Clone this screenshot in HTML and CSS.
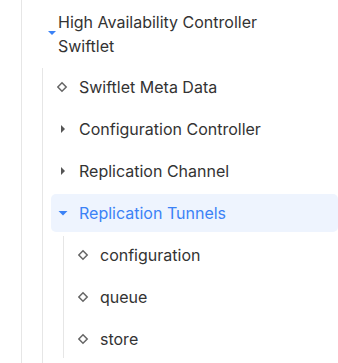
FILE: index.html
```html
<!DOCTYPE html>
<html>
<head>
<meta charset="utf-8">
<link rel="stylesheet" href="styles.css">
</head>
<body>
<div class="level level-a">
  <div class="top-node">
    <svg class="top-caret" width="8" height="4" viewBox="0 0 8 4"><polygon points="0,0 8,0 4,4" fill="#3b82f6"/></svg>
    <span class="top-label">High Availability Controller Swiftlet</span>
  </div>
  <div class="level level-b">
    <div class="row">
      <span class="icon"><svg width="12" height="12" viewBox="0 0 12 12"><polygon points="5,1.8 9.2,6 5,10.2 0.8,6" fill="none" stroke="#666" stroke-width="1.5"/></svg></span>
      <span class="label">Swiftlet Meta Data</span>
    </div>
    <div class="row">
      <span class="icon"><svg width="12" height="12" viewBox="0 0 12 12"><polygon points="4,2 8,6 4,10" fill="#555"/></svg></span>
      <span class="label">Configuration Controller</span>
    </div>
    <div class="row">
      <span class="icon"><svg width="12" height="12" viewBox="0 0 12 12"><polygon points="4,2 8,6 4,10" fill="#555"/></svg></span>
      <span class="label">Replication Channel</span>
    </div>
    <div class="row row-active">
      <span class="icon"><svg width="12" height="12" viewBox="0 0 12 12"><polygon points="1.5,4 10.5,4 6,8.5" fill="#3b82f6"/></svg></span>
      <span class="label">Replication Tunnels</span>
    </div>
    <div class="level level-c">
      <div class="row">
        <span class="icon"><svg width="12" height="12" viewBox="0 0 12 12"><polygon points="5,1.8 9.2,6 5,10.2 0.8,6" fill="none" stroke="#666" stroke-width="1.5"/></svg></span>
        <span class="label">configuration</span>
      </div>
      <div class="row">
        <span class="icon"><svg width="12" height="12" viewBox="0 0 12 12"><polygon points="5,1.8 9.2,6 5,10.2 0.8,6" fill="none" stroke="#666" stroke-width="1.5"/></svg></span>
        <span class="label">queue</span>
      </div>
      <div class="row">
        <span class="icon"><svg width="12" height="12" viewBox="0 0 12 12"><polygon points="5,1.8 9.2,6 5,10.2 0.8,6" fill="none" stroke="#666" stroke-width="1.5"/></svg></span>
        <span class="label">store</span>
      </div>
    </div>
  </div>
</div>
</body>
</html>
```
FILE: styles.css
```css
html, body {
  margin: 0;
  padding: 0;
  background: #ffffff;
}
body {
  font-family: Inter, "Noto Sans", sans-serif;
  font-size: 16px;
  color: #333333;
  overflow: hidden;
}
.level {
  display: flex;
  flex-direction: column;
  border-left: 1px solid #e6e6e6;
}
.level-a {
  margin-left: 21px;
  min-height: 100vh;
}
.level-b {
  margin-left: 20px;
  gap: 4px;
  flex: 1;
}
.level-c {
  margin-left: 20px;
  gap: 4px;
}
.top-node {
  display: flex;
  align-items: flex-start;
  padding: 10px 0 10px 26px;
}
.top-caret {
  flex: none;
  margin-top: 21px;
  margin-right: 2px;
}
.top-label {
  line-height: 24px;
  width: 240px;
}
.row {
  display: flex;
  align-items: center;
  height: 38px;
  margin-left: 8px;
  padding-left: 6px;
  border-radius: 5px;
}
.row-active {
  background: #eef4fe;
  color: #3b82f6;
}
.icon {
  flex: none;
  width: 12px;
  height: 12px;
  display: flex;
  margin-right: 10px;
}
.label {
  white-space: nowrap;
}
```
